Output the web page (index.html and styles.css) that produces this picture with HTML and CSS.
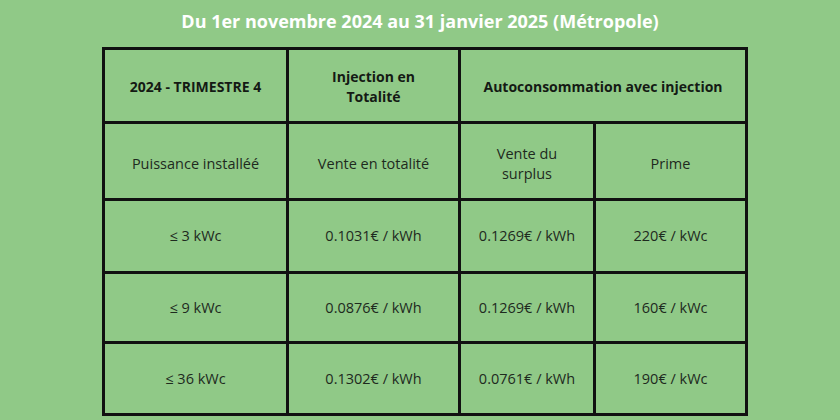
FILE: index.html
```html
<!DOCTYPE html>
<html lang="fr">
<head>
<meta charset="utf-8">
<link rel="stylesheet" href="styles.css">
</head>
<body>
<h1 class="title">Du 1er novembre 2024 au 31 janvier 2025 (Métropole)</h1>
<table class="tarifs">
  <colgroup>
    <col class="c1"><col class="c2"><col class="c3"><col class="c4">
  </colgroup>
  <tr class="r1">
    <th>2024 - TRIMESTRE 4</th>
    <th>Injection en<br>Totalité</th>
    <th colspan="2">Autoconsommation avec injection</th>
  </tr>
  <tr class="r2">
    <td>Puissance installéé</td>
    <td>Vente en totalité</td>
    <td>Vente du<br>surplus</td>
    <td>Prime</td>
  </tr>
  <tr class="r3">
    <td>≤ 3 kWc</td>
    <td>0.1031€ / kWh</td>
    <td>0.1269€ / kWh</td>
    <td>220€ / kWc</td>
  </tr>
  <tr class="r4">
    <td>≤ 9 kWc</td>
    <td>0.0876€ / kWh</td>
    <td>0.1269€ / kWh</td>
    <td>160€ / kWc</td>
  </tr>
  <tr class="r5">
    <td>≤ 36 kWc</td>
    <td>0.1302€ / kWh</td>
    <td>0.0761€ / kWh</td>
    <td>190€ / kWc</td>
  </tr>
</table>
</body>
</html>
```
FILE: styles.css
```css
html, body {
  margin: 0;
  padding: 0;
}
body {
  width: 840px;
  height: 420px;
  overflow: hidden;
  background: #90c987;
  font-family: "Open Sans", "Noto Sans", sans-serif;
}
.title {
  margin: 0;
  height: 47px;
  box-sizing: border-box;
  padding-top: 9px;
  text-align: center;
  color: #ffffff;
  font-size: 18px;
  font-weight: 700;
  line-height: 25px;
}
.tarifs {
  margin-left: 102px;
  border-collapse: separate;
  border-spacing: 0;
  table-layout: fixed;
  width: 646px;
  border-top: 3px solid #111;
  border-left: 3px solid #111;
}
.c1 { width: 184px; }
.c2 { width: 172px; }
.c3 { width: 135px; }
.c4 { width: 152px; }
.tarifs th,
.tarifs td {
  border-right: 3px solid #111;
  border-bottom: 3px solid #111;
  padding: 0;
  text-align: center;
  vertical-align: middle;
  color: #1e2a1e;
  font-size: 14.5px;
  line-height: 20px;
  box-sizing: border-box;
}
.tarifs th {
  font-size: 14px;
  font-weight: 700;
  color: #141a14;
  padding-top: 2px;
}
.r2 td {
  padding-top: 5px;
}
.r1 { height: 74px; }
.r2 { height: 77px; }
.r3 { height: 73px; }
.r4 { height: 70px; }
.r5 { height: 72px; }
```
